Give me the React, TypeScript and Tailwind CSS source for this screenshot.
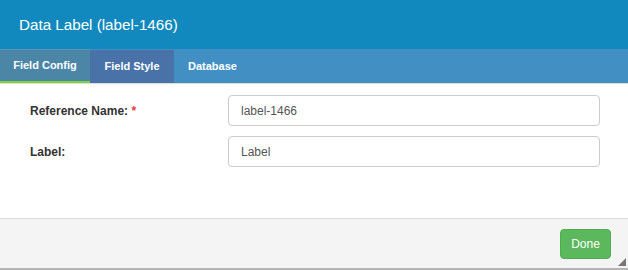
export default function App() {
  return (
    <div className="w-[628px] h-[270px] flex flex-col bg-white overflow-hidden" style={{ fontFamily: '"Liberation Sans", Arial, sans-serif' }}>
      {/* Header */}
      <div className="h-[49px] shrink-0 bg-[#1289be] flex items-center px-[19px]">
        <h1 className="text-[15.2px] text-white leading-none">Data Label (label-1466)</h1>
      </div>

      {/* Tabs */}
      <div className="h-[35px] shrink-0 bg-[#428fc4] flex border-b border-[#dddddd]">
        <div className="w-[90px] flex items-center justify-center bg-[#4b86a6] border-t border-[#5a95b5] border-b-2 border-b-[#7ed23a] text-[11px] font-bold text-white">
          Field Config
        </div>
        <div className="w-[84px] flex items-center justify-center bg-[#4872a8] mt-[1px] text-[11px] font-bold text-white">
          Field Style
        </div>
        <div className="w-[77px] flex items-center justify-center text-[11px] font-bold text-white">
          Database
        </div>
      </div>

      {/* Form */}
      <div className="flex-1 flex flex-col gap-[10px] pt-[11px] pl-[30px] pr-[28px]">
        <div className="flex items-center h-[31px]">
          <label className="w-[198px] text-[12px] font-bold text-[#333333]">
            Reference Name: <span className="text-[#e8383d]">*</span>
          </label>
          <div className="flex-1 h-[31px] border border-[#cccccc] rounded-[4px] flex items-center px-[12px] text-[12px] text-[#555555]">
            label-1466
          </div>
        </div>
        <div className="flex items-center h-[31px]">
          <label className="w-[198px] text-[12px] font-bold text-[#333333]">Label:</label>
          <div className="flex-1 h-[31px] border border-[#cccccc] rounded-[4px] flex items-center px-[12px] text-[12px] text-[#555555]">
            Label
          </div>
        </div>
      </div>

      {/* Footer */}
      <div className="relative h-[52px] shrink-0 bg-[#f4f4f4] border-t border-[#dcdcdc] border-b-2 border-b-[#b5b5b5] flex items-center justify-end pr-[17px]">
        <button className="w-[51px] h-[30px] bg-[#5cb85c] border border-[#4cae4c] rounded-[4px] text-[12px] text-white mt-[1px]">
          Done
        </button>
        <svg className="absolute right-[2px] bottom-[2px]" width="8" height="8" viewBox="0 0 8 8">
          <path d="M8 0 L8 8 L0 8 Z" fill="#777777" />
        </svg>
      </div>
    </div>
  );
}
